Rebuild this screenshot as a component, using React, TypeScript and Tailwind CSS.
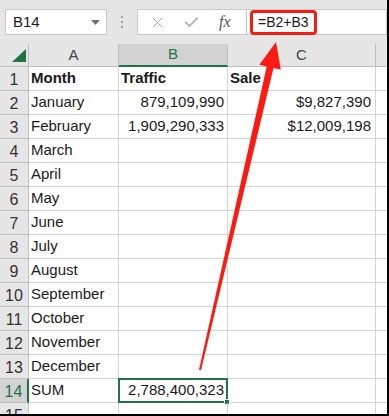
import { X, Check } from "lucide-react";

const months = [
  "January",
  "February",
  "March",
  "April",
  "May",
  "June",
  "July",
  "August",
  "September",
  "October",
  "November",
  "December",
];

type Row = { a: string; b?: string; c?: string; bold?: boolean };

const rows: Row[] = [
  { a: "Month", b: "Traffic", c: "Sale", bold: true },
  { a: months[0], b: "879,109,990", c: "$9,827,390" },
  { a: months[1], b: "1,909,290,333", c: "$12,009,198" },
  ...months.slice(2).map((m) => ({ a: m })),
  { a: "SUM", b: "2,788,400,323" },
  { a: "" },
];

function RedArrow() {
  // tapered shaft from the sum cell up to the formula bar
  return (
    <svg className="absolute inset-0 pointer-events-none" width="389" height="416" viewBox="0 0 389 416">
      <polygon
        points="276,42 280.8,69.8 273.5,68.1 201,370.2 199,369.8 266.7,66.5 259.4,64.8"
        fill="#fb1b12"
      />
    </svg>
  );
}

export default function App() {
  return (
    <div
      className="relative w-[389px] h-[416px] overflow-hidden bg-white border-r-2 border-b-2 border-black text-[#1a1a1a]"
      style={{ fontFamily: '"Liberation Sans", Arial, sans-serif' }}
    >
      {/* Formula bar */}
      <div className="h-[44px] bg-[#e6e6e6] flex items-center pl-[5px]">
        <div className="w-[102px] h-[26px] bg-white border border-[#c8c8c8] flex items-center justify-between pl-[7px] pr-[6px]">
          <span className="text-[15px]">B14</span>
          <svg width="9" height="5" viewBox="0 0 9 5">
            <polygon points="0,0 9,0 4.5,5" fill="#707070" />
          </svg>
        </div>
        <div className="w-[30px] flex flex-col items-center gap-[3px]">
          <span className="w-[2px] h-[2px] bg-[#a0a0a0]" />
          <span className="w-[2px] h-[2px] bg-[#a0a0a0]" />
          <span className="w-[2px] h-[2px] bg-[#a0a0a0]" />
        </div>
        <div className="w-[110px] h-[26px] bg-white border border-[#c8c8c8] flex items-center">
          <X className="ml-[11px] w-[17px] h-[17px] text-[#a6a6a6]" strokeWidth={1.3} />
          <Check className="ml-[17px] w-[17px] h-[17px] text-[#b4b4b4]" strokeWidth={2.6} />
          <span
            className="ml-[19px] text-[16px] italic text-[#555]"
            style={{ fontFamily: '"Liberation Serif", "Times New Roman", serif' }}
          >
            fx
          </span>
        </div>
        <div className="flex-1 h-[26px] bg-white border border-l-0 border-[#c8c8c8] flex items-center pl-[3px]">
          <div className="h-[25px] px-[5px] border-[3px] border-[#f41d14] rounded-[4px] flex items-center text-[14px]">
            =B2+B3
          </div>
        </div>
      </div>

      {/* Column headers */}
      <div className="flex h-[23px] bg-[#e6e6e6] text-[15px] text-[#444]">
        <div className="w-[29px] border-r border-b border-[#bfbfbf] relative">
          <svg className="absolute left-[12px] top-[5px]" width="14" height="13" viewBox="0 0 14 13">
            <polygon points="14,0 14,13 0,13" fill="#217346" />
          </svg>
        </div>
        <div className="w-[90px] border-r border-b border-[#bfbfbf] flex items-center justify-center">A</div>
        <div className="w-[109px] border-r border-b-2 border-r-[#bfbfbf] border-b-[#217346] bg-[#d2d2d2] flex items-center justify-center text-[#217346]">
          B
        </div>
        <div className="w-[148px] border-r border-b border-[#bfbfbf] flex items-center justify-center">C</div>
        <div className="flex-1 border-b border-[#bfbfbf]" />
      </div>

      {/* Grid */}
      {rows.map((r, i) => {
        const sel = i === 13;
        return (
          <div key={i} className="flex h-[24px] text-[15px]">
            <div
              className={
                sel
                  ? "w-[29px] bg-[#d2d2d2] border-r-2 border-b border-r-[#217346] border-b-[#bfbfbf] flex items-end justify-center text-[16px] text-[#217346] leading-none pb-[2px]"
                  : "w-[29px] bg-[#e6e6e6] border-r border-b border-[#bfbfbf] flex items-end justify-center text-[16px] text-[#333] leading-none pb-[2px]"
              }
            >
              {i + 1}
            </div>
            <div className={`w-[90px] border-r border-b border-[#d4d4d4] flex items-center pl-[2px] ${r.bold ? "font-bold" : ""}`}>
              {r.a}
            </div>
            <div
              className={`relative w-[109px] border-r border-b border-[#d4d4d4] flex items-center ${
                r.bold ? "font-bold pl-[2px]" : "justify-end pr-[3px]"
              }`}
            >
              {r.b}
              {sel && (
                <div className="absolute -left-px -top-px -right-px -bottom-px border-2 border-[#217346]">
                  <span className="absolute -right-[4px] -bottom-[4px] w-[6px] h-[6px] bg-[#217346] border border-white" />
                </div>
              )}
            </div>
            <div
              className={`w-[148px] border-r border-b border-[#d4d4d4] flex items-center ${
                r.bold ? "font-bold pl-[2px]" : "justify-end pr-[4px]"
              }`}
            >
              {r.c}
            </div>
            <div className="flex-1 border-b border-[#d4d4d4]" />
          </div>
        );
      })}

      <RedArrow />
    </div>
  );
}
